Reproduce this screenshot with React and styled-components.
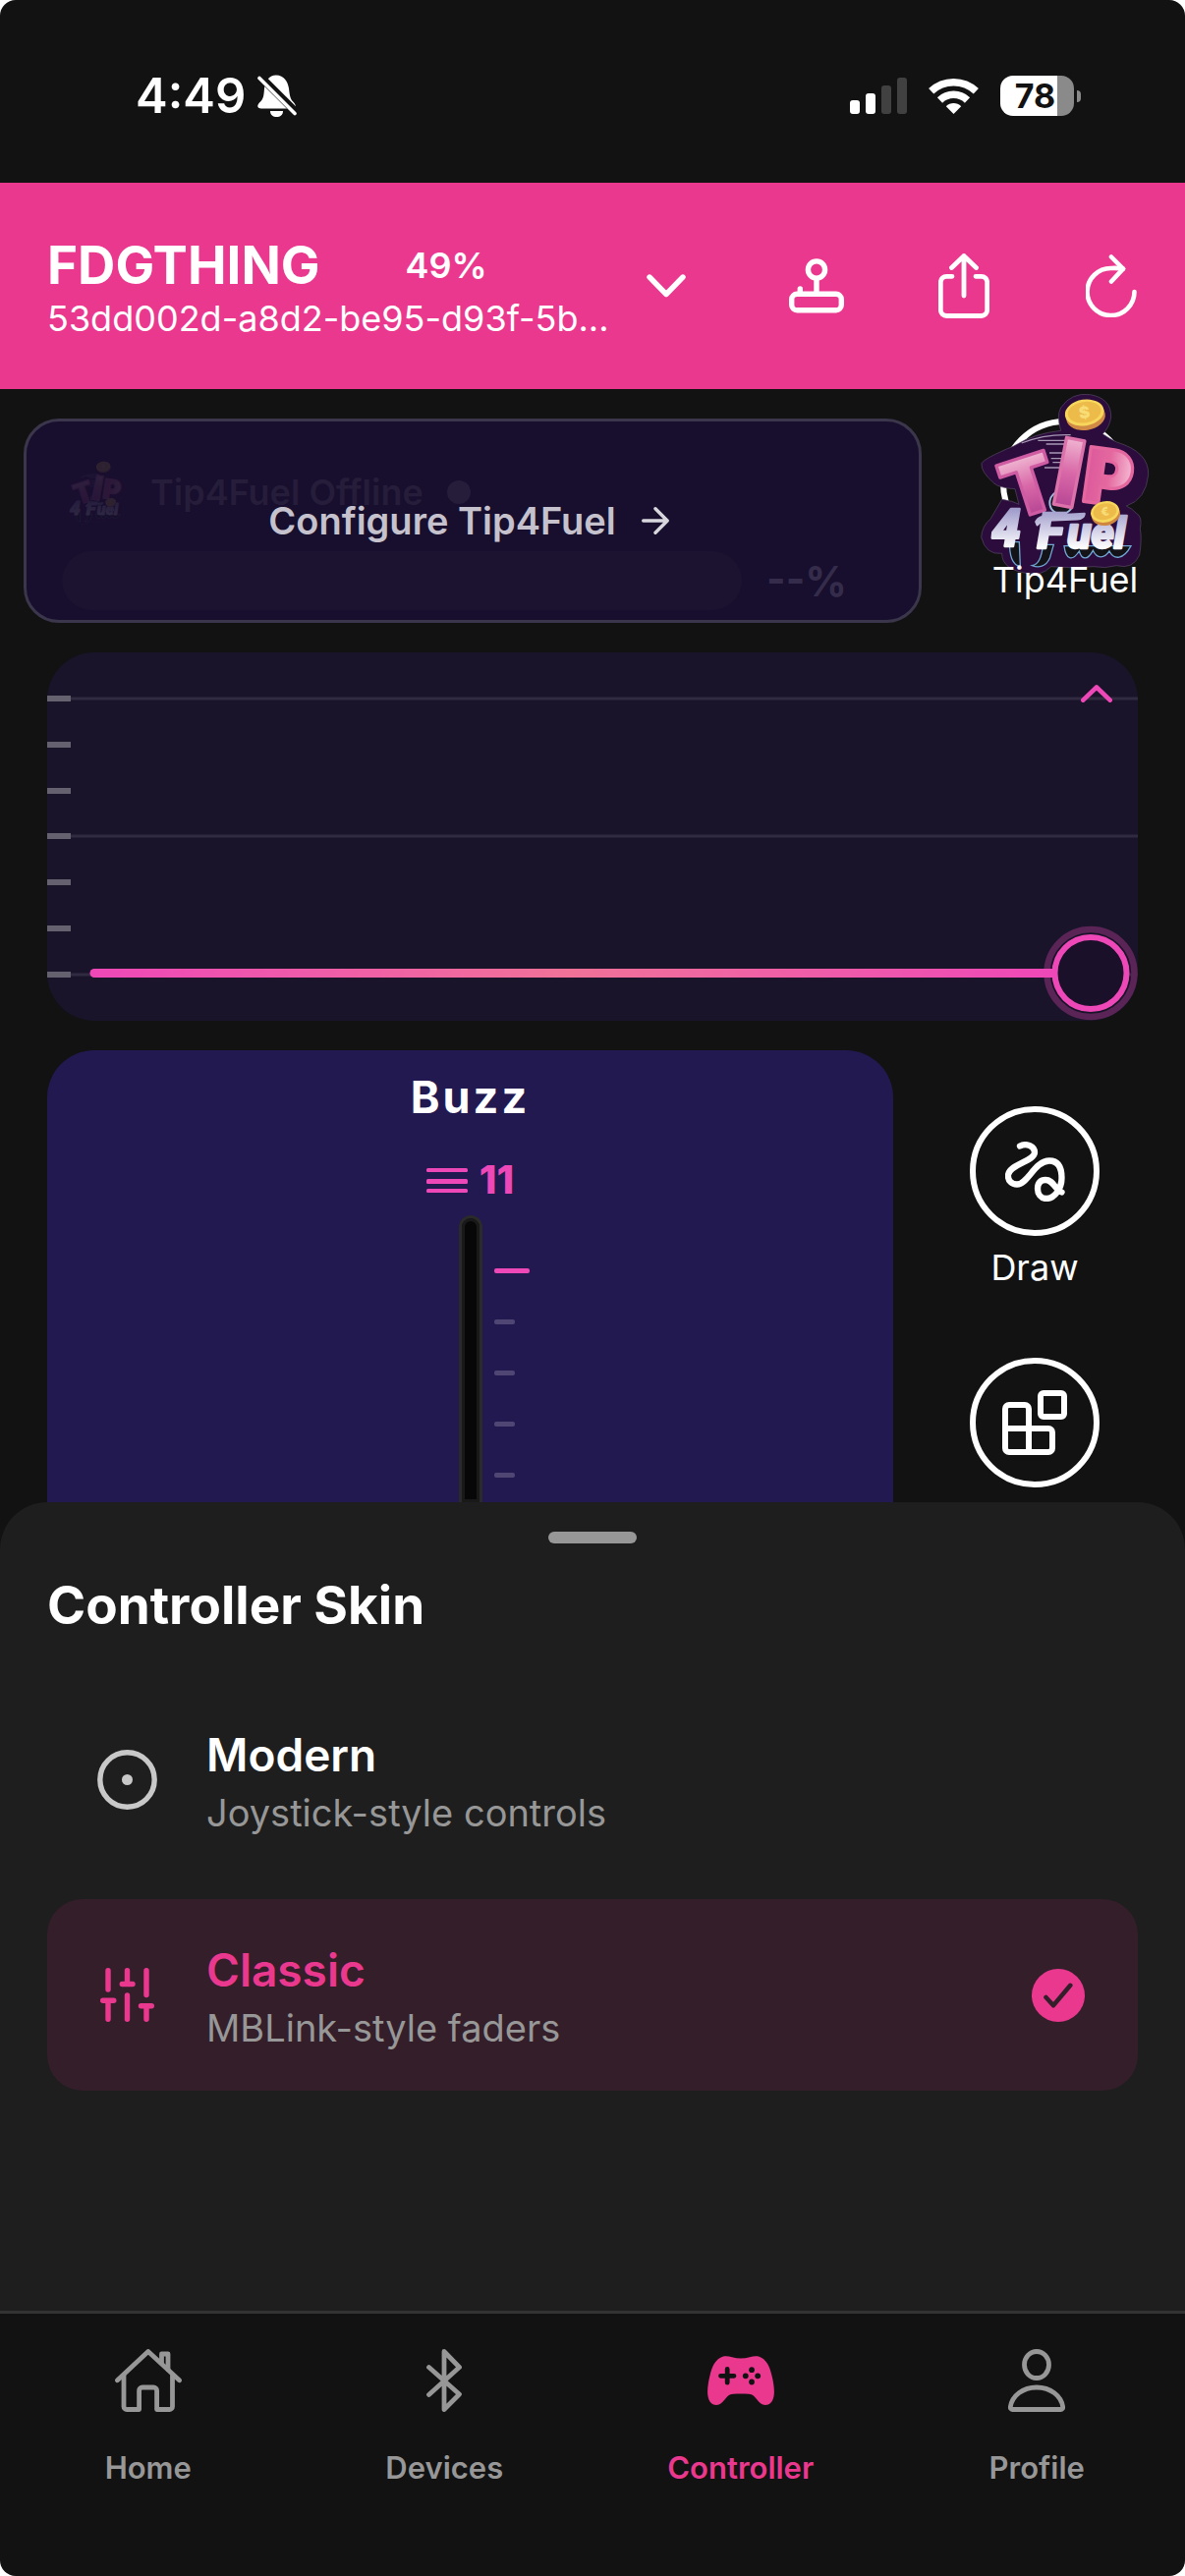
import styled, { createGlobalStyle, css } from 'styled-components';
import { useState } from 'react';

const color = {
  pink: '#eb388f',
  magenta: '#ee48b8',
  black: '#121212',
  sheet: '#1e1e1e',
  grey: '#979797',
  white: '#ffffff',
};

// status icons
const BellOffIcon = () => (
  <svg width='40' height='43' viewBox='0 0 40 43' fill='#fff' aria-hidden='true'>
    <path d='M19 0.500C27 0.500 31 7 32 14C33 24 34 25 37.500 29C40.500 33 38 34.500 35 34.500H4C0 34.500 -1 32 2 28.500C6 25 6.500 22 7 14C8 6 12 0.500 19 0.500Z' />
    <path d='M13 37H26C26 41 23 43 19.500 43C16 43 13 41 13 37Z' />
    <path d='M2 1L42 41' stroke={color.black} strokeWidth='8' />
    <path d='M2 3.500L38 39.500' stroke='#fff' strokeWidth='3.600' strokeLinecap='round' />
  </svg>
);

const SignalIcon = () => (
  <svg width='58' height='37' viewBox='0 0 58 37' fill='#fff' aria-hidden='true'>
    <rect x='0' y='23' width='10' height='14' rx='3' />
    <rect x='16' y='16' width='10' height='21' rx='3' />
    <rect x='32' y='8' width='10' height='29' rx='3' fill='#414141' />
    <rect x='48' y='0' width='10' height='37' rx='3' fill='#414141' />
  </svg>
);

const WifiIcon = () => (
  <svg width='51' height='37' viewBox='0 0 51 37' fill='none' stroke='#fff' strokeWidth='7.500' aria-hidden='true'>
    <path d='M2.700 13.700A33.200 33.200 0 0 1 48.300 13.700' />
    <path d='M11.500 23A20.200 20.200 0 0 1 39.500 23' />
    <path d='M25.500 37L17.800 29.200C22 24.800 29 24.800 33.200 29.200Z' fill='#fff' stroke='none' />
  </svg>
);

// header icons
const ChevronDownIcon = () => (
  <svg width='40' height='24' viewBox='0 0 40 24' fill='none' stroke='#fff' strokeWidth='5.400' strokeLinecap='round' strokeLinejoin='round' aria-hidden='true'>
    <path d='M3 3L20 20.500L37 3' />
  </svg>
);

const JoystickIcon = () => (
  <svg width='56' height='56' viewBox='0 0 56 56' fill='none' stroke='#fff' strokeWidth='5.400' strokeLinecap='round' aria-hidden='true'>
    <circle cx='28' cy='11.500' r='8.600' />
    <path d='M28 21V35M11.300 31V35' />
    <rect x='2.700' y='36.300' width='50.600' height='16.500' rx='5.500' />
  </svg>
);

const ShareIcon = () => (
  <svg width='52' height='66' viewBox='0 0 52 66' fill='none' stroke='#fff' strokeWidth='4.800' strokeLinecap='round' strokeLinejoin='round' aria-hidden='true'>
    <path d='M14 23.300H8.300A6 6 0 0 0 2.300 29.300V57.500A6 6 0 0 0 8.300 63.500H43.700A6 6 0 0 0 49.700 57.500V29.300A6 6 0 0 0 43.700 23.300H38' />
    <path d='M26 43V2.500M13.500 14.500L26 2.500L38.500 14.500' />
  </svg>
);

const RefreshIcon = () => (
  <svg width='52' height='64' viewBox='0 0 52 64' fill='none' stroke='#fff' strokeWidth='4.600' strokeLinecap='round' strokeLinejoin='round' aria-hidden='true'>
    <path d='M38 14.600C34 13.900 30 13.700 26 14A24 24 0 1 0 49.500 38' />
    <path d='M26 2.500L38 14.600L26 27.500' />
  </svg>
);

// controller icons
const ArrowRightIcon = () => (
  <svg width='28' height='28' viewBox='0 0 28 28' fill='none' stroke='#d9d7de' strokeWidth='3.400' strokeLinecap='round' strokeLinejoin='round' aria-hidden='true'>
    <path d='M1.700 14H26M14 1.800L26.200 14L14 26.200' />
  </svg>
);

const ChevronUpIcon = () => (
  <svg width='32' height='18' viewBox='0 0 32 18' fill='none' stroke={color.magenta} strokeWidth='4.600' strokeLinecap='round' strokeLinejoin='round' aria-hidden='true'>
    <path d='M2.300 15.700L16 2.500L29.700 15.700' />
  </svg>
);

const LevelsIcon = () => (
  <svg width='42' height='25' viewBox='0 0 42 25' fill={color.magenta} aria-hidden='true'>
    <rect width='42' height='4' rx='1.500' />
    <rect y='11' width='42' height='5' rx='1.500' />
    <rect y='21' width='42' height='4' rx='1.500' />
  </svg>
);

const SquiggleIcon = () => (
  <svg width='61' height='61' viewBox='0 0 61 61' fill='none' stroke='#fff' strokeWidth='6.300' strokeLinecap='round' aria-hidden='true'>
    <path d='M15 4.500C22 1 30 5 30 11C30 20 4 23 3 34C2.500 40 7 43.500 12 43.500C23 43.500 30 19.500 45 19.500C55 19.500 57.500 28 57.500 37C57.500 48 50 58 42 58C36 58 33 53 33 48C33 42 36 39 41 39C49 39 50 48 57.500 51.500' />
  </svg>
);

const BlocksIcon = () => (
  <svg width='66' height='66' viewBox='0 0 66 66' fill='none' stroke='#fff' strokeWidth='6' aria-hidden='true'>
    <path d='M3 39V19A4 4 0 0 1 7 15H23A4 4 0 0 1 27 19V63' />
    <path d='M3 39H47A4 4 0 0 1 51 43V59A4 4 0 0 1 47 63H7A4 4 0 0 1 3 59V39Z' />
    <rect x='39' y='3' width='24' height='24' rx='3' />
  </svg>
);

const FuelLogo = ({ width }) => (
  <svg width={width} viewBox='85 22 516 560' overflow='visible' fontFamily='Inter, sans-serif' fontWeight='900' aria-hidden='true'>
    <defs>
      <linearGradient id='tip' x1='0' y1='0' x2='0' y2='1'>
        <stop offset='0.200' stopColor='#efb3d0' />
        <stop offset='0.500' stopColor='#d968a8' />
        <stop offset='0.800' stopColor='#b84795' />
      </linearGradient>
      <linearGradient id='pee' x1='0' y1='0' x2='1' y2='0'>
        <stop offset='0' stopColor='#dc579c' />
        <stop offset='0.500' stopColor='#e4699f' />
        <stop offset='1' stopColor='#f6bfd8' />
      </linearGradient>
      <linearGradient id='chrome' gradientUnits='userSpaceOnUse' x1='0' y1='385' x2='0' y2='500'>
        <stop offset='0' stopColor='#a39fcd' />
        <stop offset='1' stopColor='#ffffff' />
      </linearGradient>
    </defs>
    <path
      d='M186 187Q250 148 330 140Q316 95 330 70Q362 22 420 30Q485 42 483 100Q478 130 458 150Q480 165 500 175Q600 205 597 275Q590 350 530 370Q548 378 560 392Q580 402 572 440Q578 470 570 520Q550 565 500 552Q465 562 430 555Q365 562 300 555Q270 585 230 576Q150 565 150 515Q100 520 87 465Q90 430 115 410L150 350Q185 355 202 365L190 318Q140 315 125 300Q85 265 88 240Q95 225 186 187Z'
      fill='#2c0b3d'
      stroke='#574c63'
      strokeWidth='2'
    />
    <path d='M210 178Q280 150 360 153M260 170H362M285 181H360M295 208H350M300 225H348M305 237H345M280 253H342' stroke='#a698b5' strokeWidth='4' fill='none' />
    <circle cx='331' cy='360' r='35' fill='#17131f' stroke='#9dbbdc' strokeWidth='6' />
    <g strokeWidth='10' strokeLinejoin='round'>
      <text fontSize='240' transform='translate(180 415) rotate(-18)' fill='url(#tip)' stroke='#cf5ca3'>T</text>
      <text fontSize='285' transform='translate(295 362) rotate(11)' fill='url(#tip)' stroke='#dd72ab'>I</text>
      <text fontSize='232' transform='translate(388 354) rotate(8)' fill='url(#pee)' stroke='#e4689f'>P</text>
    </g>
    <g fill='#131318' stroke='#6fa6d2' strokeWidth='4'>
      <path d='M174 480C172 520 182 552 206 554L203 480Z' />
      <path d='M276 488C270 530 262 548 242 552C262 560 284 556 296 530L308 488Z' />
      <path d='M340 492C345 535 365 540 386 508C394 536 412 536 428 506C440 532 462 532 478 508C492 536 522 534 544 492Z' />
    </g>
    <g stroke='url(#chrome)' strokeWidth='7' strokeLinejoin='round' fill='url(#chrome)' fontFamily='Roboto, sans-serif' fontStyle='italic'>
      <text x='118' y='494' fontSize='160'>4</text>
      <text x='258' y='498' fontSize='150'>F</text>
      <text x='350' y='500' fontSize='132'>uel</text>
      <path d='M254 418Q262 402 290 400L402 394Q400 408 380 410L290 414Q268 416 258 428Z' />
    </g>
    <g transform='rotate(-9 402 85)'>
      <ellipse cx='404' cy='98' rx='60' ry='41' fill='#d08a45' />
      <ellipse cx='402' cy='85' rx='60' ry='40' fill='#f7d65c' />
      <ellipse cx='402' cy='84' rx='51' ry='32' fill='#edbb4a' />
      <text x='402' y='102' fontSize='50' textAnchor='middle' fill='#f8dc75'>$</text>
    </g>
    <g transform='rotate(-12 465 390)'>
      <ellipse cx='466' cy='397' rx='44' ry='33' fill='#cf8740' />
      <ellipse cx='465' cy='388' rx='44' ry='32' fill='#f7d65c' />
      <ellipse cx='465' cy='387' rx='36' ry='25' fill='#edbb4a' />
      <text x='465' y='400' fontSize='36' textAnchor='middle' fill='#f8dc75'>€</text>
    </g>
  </svg>
);

// skin icons
const StickIcon = () => (
  <svg width='61' height='61' viewBox='0 0 61 61' aria-hidden='true'>
    <circle cx='30.500' cy='30.500' r='27.700' fill='none' stroke='#c8c8c8' strokeWidth='5.400' />
    <circle cx='30.500' cy='30.500' r='5.500' fill='#c8c8c8' />
  </svg>
);

const SlidersIcon = () => (
  <svg width='55' height='55' viewBox='0 0 55 55' fill='none' stroke={color.pink} strokeWidth='5.400' strokeLinecap='round' aria-hidden='true'>
    <path d='M8 2.700V22M2.700 33.200H13.800M8 33.200V52.300M27.500 2.700V16.500M22.300 16.500H33M27.500 28V52.300M47 2.700V27.500M41.500 38.700H52.300M47 38.700V52.300' />
  </svg>
);

const CheckIcon = () => (
  <StyledCheckIcon width='54' height='54' viewBox='0 0 54 54' fill='none' stroke='#331e2a' strokeWidth='4.500' strokeLinecap='round' strokeLinejoin='round' aria-hidden='true'>
    <path d='M14.500 29L22 37.300L39.300 16.800' />
  </StyledCheckIcon>
);

// tab icons
const HomeIcon = () => (
  <svg width='68' height='64' viewBox='0 0 68 64' fill='none' stroke='currentColor' strokeWidth='4.800' strokeLinecap='round' strokeLinejoin='round' aria-hidden='true'>
    <path d='M2.500 31.800L33.800 2.500L65.500 31.800' />
    <path d='M47.500 14V5H54V21' />
    <path d='M9 27V58.500A3 3 0 0 0 12 61.500H24.600V42.300A3.300 3.300 0 0 1 27.900 39H39.300A3.300 3.300 0 0 1 42.600 42.300V61.500H55.500A3 3 0 0 0 58.500 58.500V27' />
  </svg>
);

const BluetoothIcon = () => (
  <svg width='36' height='64' viewBox='0 0 36 64' fill='none' stroke='currentColor' strokeWidth='4.800' strokeLinecap='round' strokeLinejoin='round' aria-hidden='true'>
    <path d='M2.500 18.500L33.500 46L18 61.500V2.500L33.500 18.500L2.500 46.500' />
  </svg>
);

const GamepadIcon = () => (
  <svg width='68' height='50' viewBox='0 0 68 50' fill='currentColor' aria-hidden='true'>
    <path d='M16 0.500C19 -0.300 22 0.300 25 1.300C31 3 37 3 43 1.300C46 0.300 49 -0.300 52 0.500C60 3 63.500 11 65.500 20C67.500 28 68.500 36 67.500 41C66.500 47 63 50 59 50C51 50 50 39 42 38.800C37 38.300 31 38.300 26 38.800C18 39 17 50 9 50C5 50 1.500 47 0.500 41C-0.500 36 0.500 28 2.500 20C4.500 11 8 3 16 0.500Z' />
    <path d='M13.500 20.300H27M20.200 13.500V27.200' stroke={color.black} strokeWidth='4.800' strokeLinecap='round' />
    <g fill={color.black}>
      <circle cx='45' cy='14.200' r='2.900' />
      <circle cx='45' cy='26.500' r='2.900' />
      <circle cx='38.800' cy='20.300' r='2.900' />
      <circle cx='51.200' cy='20.300' r='2.900' />
    </g>
  </svg>
);

const ProfileIcon = () => (
  <svg width='58' height='64' viewBox='0 0 58 64' fill='none' stroke='currentColor' strokeWidth='4.800' strokeLinejoin='round' aria-hidden='true'>
    <ellipse cx='29' cy='16' rx='12.500' ry='13.500' />
    <path d='M4.500 61.500A2.200 2.200 0 0 1 2.300 59C4 47.500 15 39 29 39C43 39 54 47.500 55.700 59A2.200 2.200 0 0 1 53.500 61.500Z' />
  </svg>
);

const Timeline = () => (
  <StyledTimelineChart viewBox='0 0 1110 375' role='img' aria-label='Intensity timeline'>
    <defs>
      <linearGradient id='level' gradientUnits='userSpaceOnUse' x1='44' y1='0' x2='1020' y2='0'>
        <stop offset='0' stopColor='#ee48b8' />
        <stop offset='0.500' stopColor='#f07298' />
        <stop offset='1' stopColor='#ee48b8' />
      </linearGradient>
    </defs>
    {[47, 187, 328].map(y => (
      <rect key={y} y={y - 1.5} width='1110' height='3' fill='#302b40' />
    ))}
    {[47, 94, 141, 187, 234, 281, 328].map(y => (
      <rect key={y} y={y - 3} width='24' height='6' fill='#66616f' />
    ))}
    <circle cx='1062' cy='326.500' r='44.500' fill='none' stroke='#5b2457' strokeWidth='6.500' />
    <path d='M48.500 326.500H1026' stroke='url(#level)' strokeWidth='9' />
    <circle cx='48' cy='326.500' r='4.500' fill='#ee48b8' />
    <circle cx='1062' cy='326.500' r='36.500' fill='#1b1029' stroke={color.magenta} strokeWidth='6' />
  </StyledTimelineChart>
);

const SideAction = ({ label, icon, ...rest }) => (
  <StyledSideAction type='button' {...rest}>
    <StyledRound>{icon}</StyledRound>
    {label && <StyledSideLabel>{label}</StyledSideLabel>}
  </StyledSideAction>
);

const skins = [
  { id: 'modern', title: 'Modern', description: 'Joystick-style controls', icon: <StickIcon /> },
  { id: 'classic', title: 'Classic', description: 'MBLink-style faders', icon: <SlidersIcon /> },
];

const tabs = [
  { id: 'home', label: 'Home', icon: <HomeIcon /> },
  { id: 'devices', label: 'Devices', icon: <BluetoothIcon /> },
  { id: 'controller', label: 'Controller', icon: <GamepadIcon /> },
  { id: 'profile', label: 'Profile', icon: <ProfileIcon /> },
];

const App = () => {
  const [skin, setSkin] = useState('classic');
  const [buzz, setBuzz] = useState(0);

  return (
    <>
      <GlobalStyle />
      <StyledScreen>
        <StyledStatusBar>
          <StyledTime>4:49</StyledTime>
          <BellOffIcon />
          <StyledStatusIcons>
            <SignalIcon />
            <WifiIcon />
            <StyledBattery>
              <StyledBatteryBody>78</StyledBatteryBody>
              <StyledBatteryTip />
            </StyledBattery>
          </StyledStatusIcons>
        </StyledStatusBar>

        <StyledHeader>
          <StyledDevice type='button'>
            <StyledDeviceText>
              <StyledDeviceTop>
                <StyledDeviceName>FDGTHING</StyledDeviceName>
                <StyledDeviceLevel>49%</StyledDeviceLevel>
              </StyledDeviceTop>
              <StyledDeviceId>53dd002d-a8d2-be95-d93f-5b...</StyledDeviceId>
            </StyledDeviceText>
            <ChevronDownIcon />
          </StyledDevice>
          <StyledTool type='button' aria-label='Controller skin'>
            <JoystickIcon />
          </StyledTool>
          <StyledTool type='button' aria-label='Share'>
            <ShareIcon />
          </StyledTool>
          <StyledTool type='button' aria-label='Refresh'>
            <RefreshIcon />
          </StyledTool>
        </StyledHeader>

        <StyledMain>
          <StyledFuelRow>
            <StyledFuelCard>
              <StyledFuelTop>
                <StyledFadedLogo>
                  <FuelLogo width='62' />
                </StyledFadedLogo>
                <span>Tip4Fuel Offline</span>
                <StyledDot />
              </StyledFuelTop>
              <StyledFuelBottom>
                <StyledFuelBar />
                <StyledFuelValue>--%</StyledFuelValue>
              </StyledFuelBottom>
              <StyledConfigure type='button'>
                Configure Tip4Fuel
                <ArrowRightIcon />
              </StyledConfigure>
            </StyledFuelCard>
            <SideAction label='Tip4Fuel' icon={<FuelLogo width='172' />} />
          </StyledFuelRow>

          <StyledTimeline>
            <Timeline />
            <StyledCollapse type='button' aria-label='Collapse timeline'>
              <ChevronUpIcon />
            </StyledCollapse>
          </StyledTimeline>

          <StyledFaderRow>
            <StyledFaderCard>
              <StyledFaderName htmlFor='buzz'>Buzz</StyledFaderName>
              <StyledReadout>
                <LevelsIcon />
                11
              </StyledReadout>
              <StyledFader>
                <StyledGroove
                  id='buzz'
                  type='range'
                  min='0'
                  max='20'
                  value={buzz}
                  onChange={e => setBuzz(e.target.value)}
                />
                <StyledTicks>
                  <StyledTick $active />
                  <StyledTick />
                  <StyledTick />
                  <StyledTick />
                  <StyledTick />
                </StyledTicks>
              </StyledFader>
            </StyledFaderCard>
            <StyledRail>
              <SideAction label='Draw' icon={<SquiggleIcon />} />
              <SideAction aria-label='Patterns' icon={<BlocksIcon />} />
            </StyledRail>
          </StyledFaderRow>
        </StyledMain>

        <StyledSheet>
          <StyledGrabber />
          <StyledSheetTitle>Controller Skin</StyledSheetTitle>
          <StyledOptions>
            {skins.map(({ id, title, description, icon }) => (
              <StyledOption key={id} $active={skin === id}>
                <StyledOptionIcon>{icon}</StyledOptionIcon>
                <StyledOptionText>
                  <StyledOptionTitle $active={skin === id}>{title}</StyledOptionTitle>
                  <StyledOptionDescription>{description}</StyledOptionDescription>
                </StyledOptionText>
                <StyledRadioWrapper>
                  <StyledRadio
                    type='radio'
                    name='skin'
                    value={id}
                    checked={skin === id}
                    onChange={() => setSkin(id)}
                  />
                  {skin === id && <CheckIcon />}
                </StyledRadioWrapper>
              </StyledOption>
            ))}
          </StyledOptions>
        </StyledSheet>

        <StyledTabBar>
          {tabs.map(({ id, label, icon }) => (
            <StyledTab key={id} href={`#${id}`} $active={id === 'controller'}>
              <StyledTabIcon>{icon}</StyledTabIcon>
              {label}
            </StyledTab>
          ))}
        </StyledTabBar>
      </StyledScreen>
    </>
  );
};

const GlobalStyle = createGlobalStyle`
  *, *::before, *::after {
    box-sizing: border-box;
  }
  body {
    margin: 0;
    background: ${color.white};
    color: ${color.white};
    font-family: Inter, 'Liberation Sans', sans-serif;
  }
  button, input {
    font: inherit;
    color: inherit;
    margin: 0;
  }
  button {
    padding: 0;
    border: 0;
    background: none;
    cursor: pointer;
  }
  svg {
    display: block;
    flex-shrink: 0;
  }
`;

const StyledScreen = styled.div`
  display: flex;
  flex-direction: column;
  min-height: 100vh;
  background: ${color.black};
  border-radius: 16px;
  overflow: hidden;
`;

const StyledStatusBar = styled.div`
  display: flex;
  align-items: center;
  gap: 12px;
  height: 186px;
  padding: 9px 106px 0 138px;
`;

const StyledTime = styled.time`
  font-size: 49px;
  font-weight: 600;
`;

const StyledStatusIcons = styled.div`
  display: flex;
  align-items: center;
  gap: 22px;
  margin-left: auto;
`;

const StyledBattery = styled.div`
  display: flex;
  align-items: center;
  gap: 3px;
`;

const StyledBatteryBody = styled.div`
  display: flex;
  align-items: center;
  justify-content: center;
  width: 75px;
  height: 41px;
  padding-right: 4px;
  border-radius: 13px;
  background: linear-gradient(to right, ${color.white} 78%, #8a8a8a 78%);
  color: ${color.black};
  font-size: 34px;
  font-weight: 700;
`;

const StyledBatteryTip = styled.div`
  width: 4px;
  height: 12px;
  border-radius: 0 4px 4px 0;
  background: #8a8a8a;
`;

const StyledHeader = styled.header`
  display: flex;
  align-items: center;
  height: 210px;
  padding-left: 48px;
  background: ${color.pink};
`;

const StyledDevice = styled.button`
  display: flex;
  align-items: center;
  gap: 36px;
  flex: 1;
  min-width: 0;
  padding-right: 58px;
  text-align: left;
`;

const StyledDeviceText = styled.div`
  flex: 1;
  min-width: 0;
  padding-top: 6px;
`;

const StyledDeviceTop = styled.div`
  display: flex;
  align-items: center;
  gap: 87px;
  line-height: 60px;
`;

const StyledDeviceName = styled.span`
  font-size: 53px;
  font-weight: 700;
`;

const StyledDeviceLevel = styled.span`
  font-size: 36px;
  font-weight: 600;
`;

const StyledDeviceId = styled.div`
  font-size: 36px;
  line-height: 48px;
  white-space: nowrap;
`;

const StyledTool = styled.button`
  display: flex;
  align-items: center;
  justify-content: center;
  width: 150px;
  height: 100%;
`;

const StyledMain = styled.main`
  display: flex;
  flex-direction: column;
  flex: 1;
  gap: 30px;
  padding-top: 30px;
`;

const StyledFuelRow = styled.div`
  display: flex;
  gap: 80px;
  height: 208px;
  padding: 0 56px 0 24px;
`;

const StyledFuelCard = styled.section`
  position: relative;
  flex: 1;
  padding: 36px;
  border: 3px solid #3b364b;
  border-radius: 36px;
  background: #170f2d;
`;

const StyledFuelTop = styled.div`
  display: flex;
  align-items: center;
  gap: 24px;
  height: 72px;
  padding-left: 4px;
  color: #261d3a;
  font-size: 36px;
  font-weight: 600;
`;

const StyledFadedLogo = styled.div`
  opacity: 0.1;
`;

const StyledDot = styled.span`
  width: 24px;
  height: 24px;
  border-radius: 50%;
  background: #261d3a;
`;

const StyledFuelBottom = styled.div`
  display: flex;
  align-items: center;
  gap: 25px;
  margin-top: 24px;
`;

const StyledFuelBar = styled.div`
  flex: 1;
  height: 60px;
  border-radius: 30px;
  background: #1b1330;
`;

const StyledFuelValue = styled.span`
  width: 119px;
  color: #352c4b;
  font-size: 42px;
  font-weight: 700;
`;

const StyledConfigure = styled.button`
  position: absolute;
  inset: 0;
  display: flex;
  align-items: center;
  justify-content: center;
  gap: 26px;
  padding-right: 8px;
  color: #c5c2cd;
  font-size: 38px;
  font-weight: 600;
`;

const StyledSideAction = styled.button`
  display: flex;
  flex-direction: column;
  align-items: center;
  gap: 8px;
  width: 132px;
`;

const StyledRound = styled.span`
  display: flex;
  align-items: center;
  justify-content: center;
  width: 132px;
  height: 132px;
  border: 6px solid ${color.white};
  border-radius: 50%;
`;

const StyledSideLabel = styled.span`
  font-size: 36px;
  line-height: 48px;
  white-space: nowrap;
`;

const StyledTimeline = styled.section`
  position: relative;
  margin: 0 48px;
  border-radius: 48px;
  background: #19142a;
`;

const StyledTimelineChart = styled.svg`
  width: 100%;
`;

const StyledCollapse = styled.button`
  position: absolute;
  top: 21px;
  right: 14px;
  padding: 12px;
`;

const StyledFaderRow = styled.div`
  display: flex;
  flex: 1;
  gap: 78px;
  padding: 0 87px 0 48px;
`;

const StyledFaderCard = styled.section`
  display: flex;
  flex-direction: column;
  align-items: center;
  flex: 1;
  padding-top: 24px;
  border-radius: 48px 48px 0 0;
  background: #231951;
`;

const StyledFaderName = styled.label`
  font-size: 45px;
  font-weight: 700;
  line-height: 48px;
  letter-spacing: 3px;
`;

const StyledReadout = styled.div`
  display: flex;
  align-items: center;
  gap: 12px;
  margin: 36px 0 12px;
  color: ${color.magenta};
  font-size: 40px;
  font-weight: 800;
  line-height: 48px;
`;

const StyledFader = styled.div`
  display: grid;
  grid-template-columns: 1fr 24px 1fr;
  flex: 1;
  width: 100%;
`;

const StyledGroove = styled.input`
  grid-column: 2;
  width: 24px;
  height: 100%;
  appearance: none;
  writing-mode: vertical-lr;
  direction: rtl;
  border: 3px solid #2a2a2a;
  border-bottom: 0;
  border-radius: 12px 12px 0 0;
  background: #070707;
  box-shadow: inset 0 0 0 3px #191919;

  &::-webkit-slider-thumb {
    appearance: none;
    width: 18px;
    height: 18px;
    background: transparent;
  }
`;

const StyledTicks = styled.div`
  display: flex;
  flex-direction: column;
  gap: 47px;
  padding: 54px 0 0 12px;
`;

const StyledTick = styled.span`
  width: ${({ $active }) => ($active ? 36 : 21)}px;
  height: 5px;
  border-radius: 2px;
  background: ${({ $active }) => ($active ? color.magenta : '#4f4674')};
`;

const StyledRail = styled.aside`
  display: flex;
  flex-direction: column;
  gap: 68px;
  padding-top: 57px;
`;

const StyledSheet = styled.section`
  padding: 30px 48px 224px;
  border-radius: 48px 48px 0 0;
  background: ${color.sheet};
`;

const StyledGrabber = styled.div`
  width: 90px;
  height: 12px;
  margin: 0 auto 31px;
  border-radius: 6px;
  background: ${color.grey};
`;

const StyledSheetTitle = styled.h2`
  margin: 0 0 48px;
  font-size: 53px;
  font-weight: 700;
  line-height: 64px;
`;

const StyledOptions = styled.div`
  display: flex;
  flex-direction: column;
  gap: 24px;
`;

const StyledOption = styled.label`
  display: flex;
  align-items: center;
  gap: 48px;
  height: 195px;
  padding: 0 54px 0 48px;
  border-radius: 36px;
  cursor: pointer;

  ${({ $active }) =>
    $active &&
    css`
      background: #331e2a;
    `}
`;

const StyledOptionIcon = styled.span`
  display: flex;
  justify-content: center;
  width: 66px;
`;

const StyledOptionText = styled.span`
  display: flex;
  flex-direction: column;
  flex: 1;
`;

const StyledOptionTitle = styled.span`
  color: ${({ $active }) => ($active ? color.pink : color.white)};
  font-size: 46px;
  font-weight: 600;
  line-height: 66px;
`;

const StyledOptionDescription = styled.span`
  color: ${color.grey};
  font-size: 38px;
  line-height: 52px;
`;

const StyledRadioWrapper = styled.span`
  display: grid;

  & > * {
    grid-area: 1 / 1;
  }
`;

const StyledRadio = styled.input`
  appearance: none;
  width: 54px;
  height: 54px;
  border-radius: 50%;

  &:checked {
    background: ${color.pink};
  }
`;

const StyledCheckIcon = styled.svg`
  pointer-events: none;
`;

const StyledTabBar = styled.nav`
  display: flex;
  height: 270px;
  padding-top: 33px;
  border-top: 3px solid #333333;
`;

const StyledTab = styled.a`
  display: flex;
  flex-direction: column;
  align-items: center;
  gap: 36px;
  flex: 1;
  color: ${({ $active }) => ($active ? color.pink : color.grey)};
  font-size: 31px;
  font-weight: 600;
  line-height: 36px;
  text-decoration: none;
`;

const StyledTabIcon = styled.span`
  display: flex;
  align-items: center;
  height: 70px;
`;

export default App;
